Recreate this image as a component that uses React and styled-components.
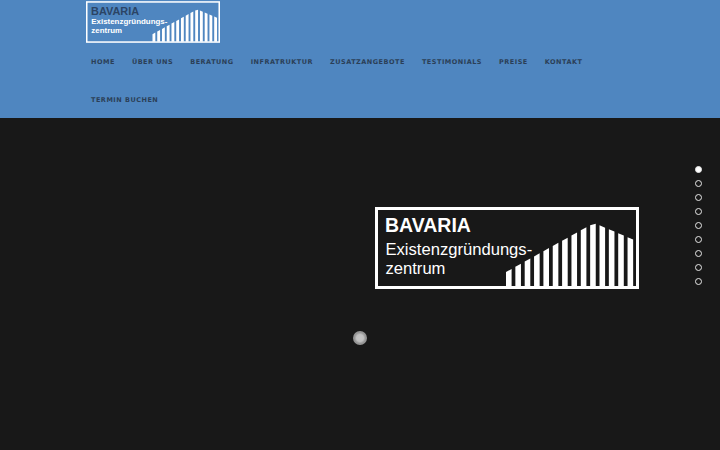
import React from 'react';
import styled, { createGlobalStyle } from 'styled-components';

const GlobalStyle = createGlobalStyle`
  html, body {
    margin: 0;
    padding: 0;
    height: 100%;
    overflow: hidden;
    background: #181818;
  }
`;

const Page = styled.div`
  position: relative;
  width: 720px;
  height: 450px;
  display: flex;
  flex-direction: column;
  overflow: hidden;
`;

const Header = styled.header`
  height: 118px;
  box-sizing: border-box;
  padding: 1px 0 0 86px;
  background: #4f86c0;
`;

const Nav = styled.nav`
  display: flex;
  flex-wrap: wrap;
  width: 540px;
`;

const NavLink = styled.a`
  height: 38px;
  line-height: 38px;
  padding: 0 5px;
  margin-right: 7px;
  font-family: "DejaVu Sans", sans-serif;
  font-size: 6.5px;
  font-weight: 700;
  letter-spacing: 0.5px;
  white-space: nowrap;
  color: #2b3f57;
`;

const Hero = styled.main`
  flex: 1;
  position: relative;
  box-sizing: border-box;
  padding: 89px 0 0 375px;
  background: #181818;
`;

const LogoSvg = styled.svg`
  display: block;
  width: ${(p) => p.$width}px;
  height: ${(p) => p.$height}px;
`;

const LogoTitle = styled.text`
  font-family: "Liberation Sans", Arial, sans-serif;
  font-size: ${(p) => p.$size}px;
  font-weight: 700;
  fill: ${(p) => p.$color};
`;

const LogoLine = styled.text`
  font-family: "Liberation Sans", Arial, sans-serif;
  font-size: ${(p) => p.$size}px;
  font-weight: ${(p) => (p.$bold ? 700 : 400)};
  fill: #fff;
`;

const Loader = styled.div`
  position: absolute;
  left: 353px;
  top: 213px;
  width: 14px;
  height: 14px;
  border-radius: 50%;
  background: radial-gradient(circle, #c4c4c4 0, #c0c0c0 35%, #969696 55%, #8c8c8c 100%);
`;

const Dots = styled.div`
  position: absolute;
  right: 18px;
  top: 48px;
  display: flex;
  flex-direction: column;
  gap: 7px;
`;

const Dot = styled.span`
  display: block;
  box-sizing: border-box;
  width: 7px;
  height: 7px;
  border-radius: 50%;
  border: 1.5px solid #e6e6e6;
  background: ${(p) => (p.$active ? '#fff' : 'transparent')};
`;

const links = ['HOME', 'ÜBER UNS', 'BERATUNG', 'INFRATRUKTUR', 'ZUSATZANGEBOTE', 'TESTIMONIALS', 'PREISE', 'KONTAKT', 'TERMIN BUCHEN'];

// roof line of the bars: rises to the peak at x=219, falls off to the right
const barTop = (x) => (x < 219 ? 16 + ((219 - x) * 49) / 88 : 16 + ((x - 219) * 16) / 38);
const bars = Array.from({ length: 14 }, (_, i) => 131 + i * 9.35);

const Logo = ({ width, height, titleColor, titleSize, lineSize, baselines, bold }) => (
  <LogoSvg $width={width} $height={height} viewBox="0 0 264 82">
    <rect x="1.5" y="1.5" width="261" height="79" fill="none" stroke="#fff" strokeWidth="3" />
    <LogoTitle x="10" y={baselines[0]} $color={titleColor} $size={titleSize}>BAVARIA</LogoTitle>
    <LogoLine x="10.5" y={baselines[1]} $bold={bold} $size={lineSize}>Existenzgründungs-</LogoLine>
    <LogoLine x="10.5" y={baselines[2]} $bold={bold} $size={lineSize}>zentrum</LogoLine>
    {bars.map((x) => (
      <polygon
        key={x}
        fill="#fff"
        points={`${x},${barTop(x)} ${x + 5.6},${barTop(x + 5.6)} ${x + 5.6},80 ${x},80`}
      />
    ))}
  </LogoSvg>
);

export default function App() {
  return (
    <Page>
      <GlobalStyle />
      <Header>
        <Logo width={134} height={42} titleColor="#2b4465" titleSize={21.5} lineSize={15.6} baselines={[27.5, 45, 63]} bold />
        <Nav>
          {links.map((link) => (
            <NavLink key={link}>{link}</NavLink>
          ))}
        </Nav>
      </Header>
      <Hero>
        <Logo width={264} height={82} titleColor="#fff" titleSize={19.5} lineSize={16.6} baselines={[25, 48, 67]} />
        <Loader />
        <Dots>
          {Array.from({ length: 9 }, (_, i) => (
            <Dot key={i} $active={i === 0} />
          ))}
        </Dots>
      </Hero>
    </Page>
  );
}
